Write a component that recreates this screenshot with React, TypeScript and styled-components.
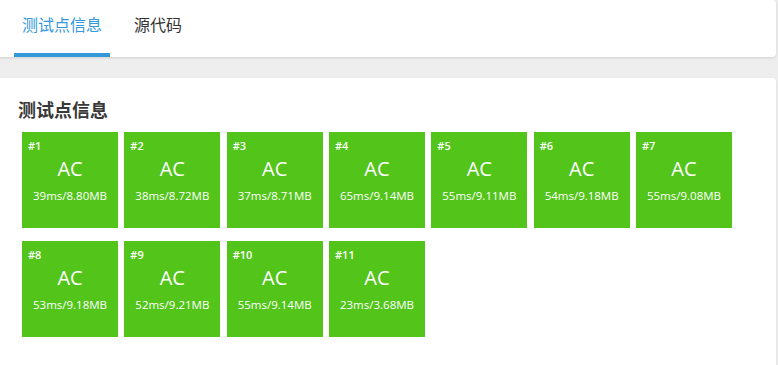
import React from "react";
import styled, { createGlobalStyle } from "styled-components";

const GlobalStyle = createGlobalStyle`
  body {
    margin: 0;
    background: #eeeeee;
    font-family: "Open Sans", "Noto Sans CJK SC", sans-serif;
    overflow: hidden;
  }
`;

const Page = styled.div`
  margin-left: -4px;
  padding-right: 2px;
`;

const TabCard = styled.div`
  display: flex;
  gap: 16px;
  padding-left: 18px;
  background: #fff;
  border-radius: 4px;
  box-shadow: 0 1px 3px rgba(0, 0, 0, 0.12);
`;

const Tab = styled.div<{ $active?: boolean }>`
  padding: 12px 8px 17px;
  font-family: "Noto Sans CJK SC", sans-serif;
  font-size: 16px;
  line-height: 24px;
  color: ${(p) => (p.$active ? "#3498db" : "#333")};
  border-bottom: 4px solid ${(p) => (p.$active ? "#3498db" : "transparent")};
  cursor: pointer;
`;

const ContentCard = styled.div`
  box-sizing: border-box;
  height: calc(100vh - 78px);
  margin-top: 21px;
  padding: 18px 22px 0;
  background: #fff;
  border-radius: 4px 4px 0 0;
  box-shadow: 0 1px 3px rgba(0, 0, 0, 0.08);
`;

const Heading = styled.h3`
  margin: 0 0 10px;
  font-family: "Noto Sans CJK SC", sans-serif;
  font-size: 18px;
  line-height: 26px;
  font-weight: 700;
  color: #383838;
`;

const CaseGrid = styled.div`
  display: flex;
  flex-wrap: wrap;
  gap: 13px 6.33px;
  margin-left: 4px;
  width: 720px;
`;

const CaseBox = styled.div`
  width: 96px;
  height: 96px;
  padding-top: 7px;
  box-sizing: border-box;
  background: #52c41a;
  color: #fff;
  display: flex;
  flex-direction: column;
`;

const CaseId = styled.div`
  padding-left: 6px;
  font-size: 11px;
  line-height: 14px;
  font-weight: 600;
`;

const Verdict = styled.div`
  margin-top: 2px;
  text-align: center;
  font-size: 20px;
  line-height: 28px;
`;

const Stats = styled.div`
  margin-top: 5px;
  text-align: center;
  font-size: 11.5px;
  line-height: 16px;
`;

const cases = [
  ["39ms", "8.80MB"],
  ["38ms", "8.72MB"],
  ["37ms", "8.71MB"],
  ["65ms", "9.14MB"],
  ["55ms", "9.11MB"],
  ["54ms", "9.18MB"],
  ["55ms", "9.08MB"],
  ["53ms", "9.18MB"],
  ["52ms", "9.21MB"],
  ["55ms", "9.14MB"],
  ["23ms", "3.68MB"],
];

export default function App() {
  return (
    <>
      <GlobalStyle />
      <Page>
        <TabCard>
          <Tab $active>测试点信息</Tab>
          <Tab>源代码</Tab>
        </TabCard>
        <ContentCard>
          <Heading>测试点信息</Heading>
          <CaseGrid>
            {cases.map(([time, mem], i) => (
              <CaseBox key={i}>
                <CaseId>#{i + 1}</CaseId>
                <Verdict>AC</Verdict>
                <Stats>
                  {time}/{mem}
                </Stats>
              </CaseBox>
            ))}
          </CaseGrid>
        </ContentCard>
      </Page>
    </>
  );
}
